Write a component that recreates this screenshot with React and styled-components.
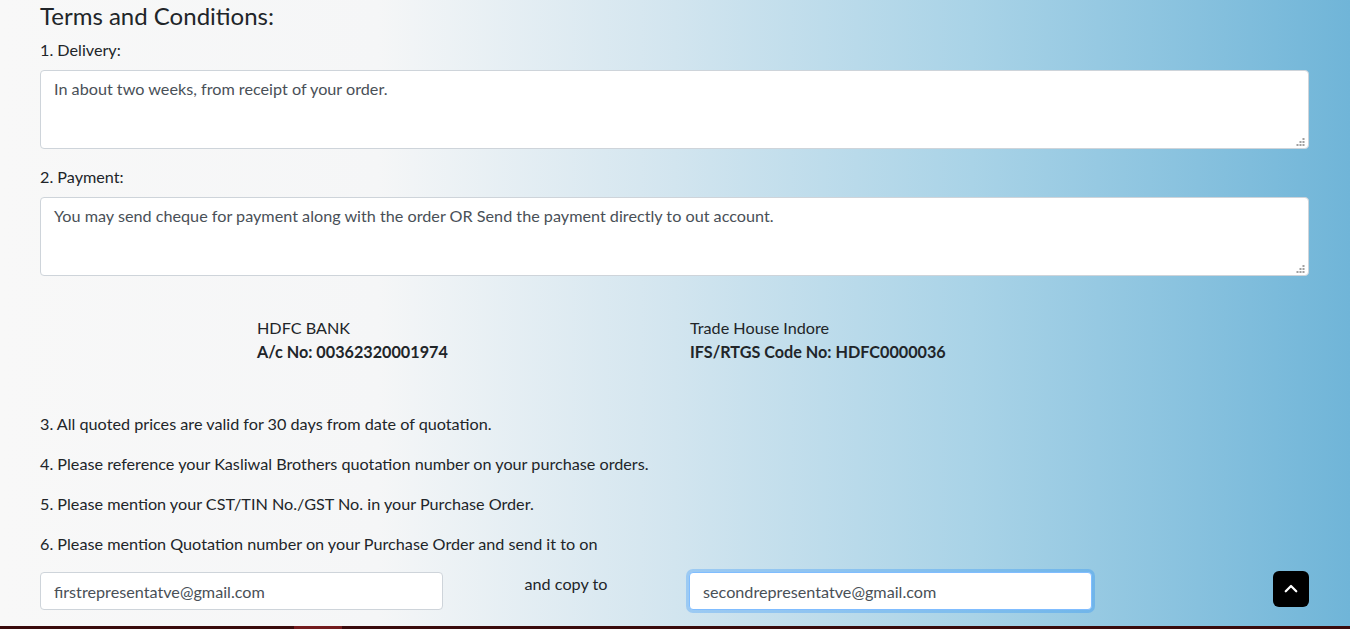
import React from "react";
import styled, { createGlobalStyle } from "styled-components";

const Global = createGlobalStyle`
  html, body { margin: 0; padding: 0; }
  body {
    font-family: Lato, "Noto Sans", "Liberation Sans", sans-serif;
    font-size: 16.2px;
    line-height: 1.5;
    color: #212529;
  }
  * { box-sizing: border-box; }
`;

const Page = styled.div`
  height: 629px;
  overflow: hidden;
  display: flex;
  flex-direction: column;
  background: linear-gradient(90deg, #f8f8f8 0%, #f5f6f7 28%, #d2e5ef 50%, #a9d3e7 72%, #70b5d8 100%);
`;

const Content = styled.div`
  flex: 1;
  padding: 1px 41px 0 40px;
`;

const Title = styled.h4`
  margin: 0 0 9px;
  font-size: 24px;
  font-weight: 400;
  line-height: 29px;
`;

const Group = styled.div`
  margin-bottom: 17px;
`;

const Label = styled.label`
  display: block;
  margin-bottom: 9px;
  line-height: 22px;
`;

const Field = styled.div`
  position: relative;
`;

const TextArea = styled.textarea`
  display: block;
  width: 100%;
  height: 79px;
  padding: 6px 13px;
  font-family: inherit;
  font-size: 16.2px;
  line-height: 24px;
  color: #495057;
  background: #fff;
  border: 1px solid #ced4da;
  border-radius: 4px;
  outline: none;
  resize: none;
`;

const Grip = styled.svg`
  position: absolute;
  right: 4px;
  bottom: 3px;
  pointer-events: none;
`;

const Bank = styled.div`
  display: grid;
  grid-template-columns: 433px 433px;
  padding: 23px 0 0 217px;
  margin-bottom: 49px;
  line-height: 24px;
`;

const BankLine = styled.div`
  font-weight: ${(p) => (p.$bold ? 700 : 400)};
`;

const TermList = styled.div`
  display: flex;
  flex-direction: column;
  gap: 18px;
`;

const Term = styled.p`
  margin: 0;
  line-height: 22px;
`;

const EmailRow = styled.div`
  display: grid;
  grid-template-columns: 403px 246px 403px;
  align-items: start;
  margin-top: 17px;
`;

const CopyTo = styled.div`
  text-align: center;
`;

const Input = styled.input`
  display: block;
  width: 100%;
  height: 38px;
  padding: 6px 13px;
  font-family: inherit;
  font-size: 16.2px;
  color: #495057;
  background: #fff;
  border: 1px solid ${(p) => (p.$focus ? "#80bdff" : "#ced4da")};
  border-radius: 4px;
  outline: none;
  box-shadow: ${(p) => (p.$focus ? "0 0 0 3px rgba(0,123,255,.25)" : "none")};
`;

const TopButton = styled.button`
  position: fixed;
  right: 41px;
  bottom: 22px;
  width: 36px;
  height: 36px;
  border: none;
  border-radius: 6px;
  background: #000;
  display: flex;
  align-items: center;
  justify-content: center;
  padding: 0;
  cursor: pointer;
`;

const Footer = styled.div`
  height: 3px;
  display: flex;
  background: #3a0b0c;
`;

const FooterMark = styled.div`
  margin-left: 294px;
  width: 48px;
  background: #731b1d;
`;

const ResizeGrip = () => (
  <Grip width="9" height="8" viewBox="0 0 9 8">
    <g fill="#a0a0a0">
      <rect x="6.5" y="0" width="2" height="2" />
      <rect x="3.5" y="3" width="2" height="2" />
      <rect x="6.5" y="3" width="2" height="2" />
      <rect x="0.5" y="6" width="2" height="2" />
      <rect x="3.5" y="6" width="2" height="2" />
      <rect x="6.5" y="6" width="2" height="2" />
    </g>
  </Grip>
);

export default function App() {
  return (
    <>
      <Global />
      <Page>
        <Content>
          <Title>Terms and Conditions:</Title>
          <Group>
            <Label>1. Delivery:</Label>
            <Field>
              <TextArea defaultValue="In about two weeks, from receipt of your order." />
              <ResizeGrip />
            </Field>
          </Group>
          <Group>
            <Label>2. Payment:</Label>
            <Field>
              <TextArea defaultValue="You may send cheque for payment along with the order OR Send the payment directly to out account." />
              <ResizeGrip />
            </Field>
          </Group>
          <Bank>
            <div>
              <BankLine>HDFC BANK</BankLine>
              <BankLine $bold>A/c No: 00362320001974</BankLine>
            </div>
            <div>
              <BankLine>Trade House Indore</BankLine>
              <BankLine $bold>IFS/RTGS Code No: HDFC0000036</BankLine>
            </div>
          </Bank>
          <TermList>
            <Term>3. All quoted prices are valid for 30 days from date of quotation.</Term>
            <Term>4. Please reference your Kasliwal Brothers quotation number on your purchase orders.</Term>
            <Term>5. Please mention your CST/TIN No./GST No. in your Purchase Order.</Term>
            <Term>6. Please mention Quotation number on your Purchase Order and send it to on</Term>
          </TermList>
          <EmailRow>
            <Input defaultValue="firstrepresentatve@gmail.com" />
            <CopyTo>and copy to</CopyTo>
            <Input $focus defaultValue="secondrepresentatve@gmail.com" />
          </EmailRow>
        </Content>
        <Footer>
          <FooterMark />
        </Footer>
        <TopButton aria-label="Scroll to top">
          <svg width="18" height="18" viewBox="0 0 24 24" fill="none" stroke="#fff" strokeWidth="3" strokeLinecap="round" strokeLinejoin="round">
            <path d="M5 15l7-7 7 7" />
          </svg>
        </TopButton>
      </Page>
    </>
  );
}
